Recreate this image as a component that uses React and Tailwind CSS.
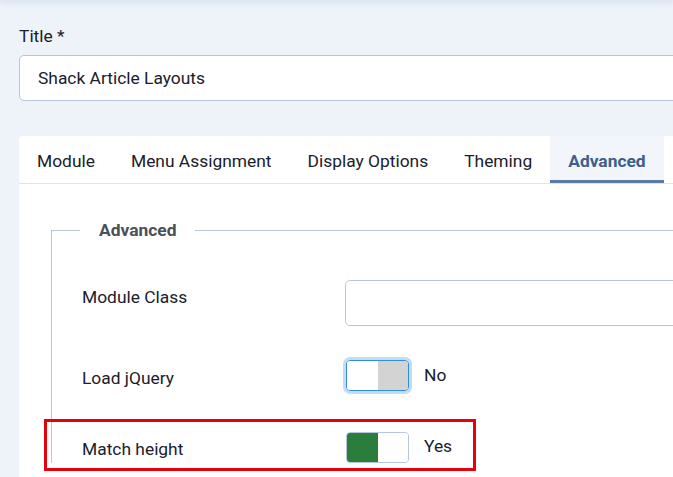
import React from 'react';

const tabs = ['Module', 'Menu Assignment', 'Display Options', 'Theming', 'Advanced'];

const Switch = ({ on, focused }) => (
  <div
    className={
      'flex h-[31px] w-[63px] overflow-hidden rounded-[4px] border ' +
      (focused
        ? 'border-[#2d8ee6] shadow-[0_0_0_3px_#c4dbf0]'
        : 'border-[#b8c6db]')
    }
  >
    <div className={on ? 'w-1/2 bg-[#2a7d3b]' : 'w-1/2 bg-white'} />
    <div className={on ? 'w-1/2 bg-white' : 'w-1/2 bg-[#d3d3d3]'} />
  </div>
);

export default function App() {
  return (
    <div
      className="relative h-[477px] w-[673px] overflow-hidden bg-[#eef3fa] text-[17.4px] text-[#1a202b]"
      style={{ fontFamily: 'Roboto, "Liberation Sans", sans-serif' }}
    >
      {/* top header shadow */}
      <div className="h-0 w-full shadow-[0_0_6px_2px_rgba(150,170,200,0.35)]" />

      <div className="w-[760px] px-[19px] pt-[24px]">
        <label className="block leading-[24px]">Title *</label>
        <div className="mt-[7px] flex h-[46px] items-center rounded-[5px] border border-[#b8c6db] bg-white pl-[18px]">
          Shack Article Layouts
        </div>

        {/* card */}
        <div className="mt-[35px] rounded-t-[4px] bg-white">
          <div className="flex border-b border-[#dde4ee]">
            {tabs.map((t) => {
              const active = t === 'Advanced';
              return (
                <div
                  key={t}
                  className={
                    'flex h-[47px] items-center border-b-[3px] px-[18px] pt-[7px] ' +
                    (active
                      ? 'border-[#5b7ba6] bg-[#f2f6fb] font-bold text-[#3d5f8c]'
                      : 'border-transparent')
                  }
                >
                  {t}
                </div>
              );
            })}
          </div>

          <div className="pl-[32px] pt-[34px] pb-10">
            <fieldset className="border-l border-t border-[#b8c6db] pl-[28px]">
              <legend className="px-[19px] font-bold leading-[24px] text-[#495057]">
                Advanced
              </legend>
              <div className="pl-[2px] pt-[38px]">
                <div className="flex">
                  <div className="w-[263px] pt-[5px] leading-[24px]">Module Class</div>
                  <div className="h-[46px] flex-1 rounded-[5px] border border-[#b8c6db] bg-white" />
                </div>
                <div className="mt-[34px] flex items-center">
                  <div className="w-[264px] pt-[5px] leading-[24px]">Load jQuery</div>
                  <Switch on={false} focused />
                  <span className="ml-[15px] pb-[1px] leading-[24px]">No</span>
                </div>
                <div className="mt-[41px] flex items-center">
                  <div className="w-[264px] pt-[3px] leading-[24px]">Match height</div>
                  <Switch on />
                  <span className="ml-[15px] pb-[3px] leading-[24px]">Yes</span>
                </div>
              </div>
            </fieldset>
          </div>
        </div>
      </div>

      {/* annotation box */}
      <div className="absolute left-[44px] top-[419px] h-[52px] w-[432px] border-[3px] border-[#e5000a]" />
    </div>
  );
}
